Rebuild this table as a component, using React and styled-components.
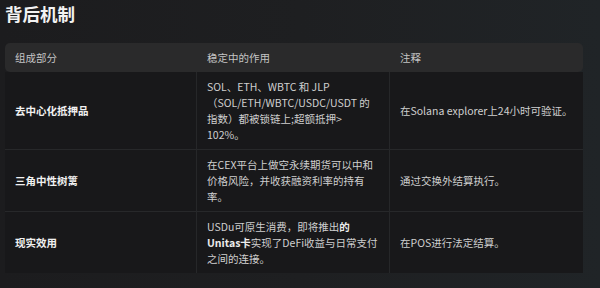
import React from "react";
import styled, { createGlobalStyle } from "styled-components";

const Global = createGlobalStyle`
  html, body { margin: 0; padding: 0; }
  body {
    width: 600px;
    height: 288px;
    overflow: hidden;
    background: linear-gradient(90deg, #1c1c1e 0%, #1e1f21 50%, #202427 100%);
    font-family: "Noto Sans CJK SC", "Noto Sans", sans-serif;
    color: #d0d0d0;
  }
`;

const Page = styled.div`
  padding: 0 5px 0 5px;
  display: flex;
  flex-direction: column;
`;

const Title = styled.h2`
  margin: 0;
  font-size: 17.5px;
  line-height: 28px;
  font-weight: 700;
  color: #f2f2f2;
`;

const Table = styled.div`
  margin-top: 15px;
  width: 578px;
  display: grid;
  grid-template-columns: 192px 193px 193px;
`;

const HeadCell = styled.div`
  background: #2a2a2b;
  height: 29px;
  display: flex;
  align-items: center;
  padding: 0 10px;
  font-size: 10.5px;
  color: #c4c4c4;
  border-radius: ${(p) => (p.$first ? "5px 0 0 5px" : p.$last ? "0 5px 5px 0" : "0")};
`;

const Cell = styled.div`
  background: #18181a;
  padding: 7px 10px 6px;
  font-size: 10.5px;
  line-height: 16px;
  color: #cfcfcf;
  border-bottom: ${(p) => (p.$lastRow ? "none" : "1px solid #27282a")};
  border-right: ${(p) => (p.$lastCol ? "none" : "1px solid #262729")};
  display: flex;
  flex-direction: column;
  justify-content: center;
  font-weight: ${(p) => (p.$bold ? 700 : 400)};
  ${(p) => p.$bold && "color: #f1f1f1;"}
`;

const Line = styled.span`
  display: block;
  white-space: nowrap;
`;

const B = styled.b`
  font-weight: 700;
  color: #ececec;
`;

const Bottom = styled.div`
  margin-top: 16px;
  height: 1px;
  width: 578px;
  background: #262729;
`;

const rows = [
  {
    name: "去中心化抵押品",
    role: [
      "SOL、ETH、WBTC 和 JLP",
      "（SOL/ETH/WBTC/USDC/USDT 的",
      "指数）都被锁链上;超额抵押>",
      "102%。",
    ],
    note: "在Solana explorer上24小时可验证。",
  },
  {
    name: "三角中性树篱",
    role: ["在CEX平台上做空永续期货可以中和", "价格风险，并收获融资利率的持有", "率。"],
    note: "通过交换外结算执行。",
  },
  {
    name: "现实效用",
    role: [
      <>USDu可原生消费，即将推出<B>的</B></>,
      <><B>Unitas卡</B>实现了DeFi收益与日常支付</>,
      "之间的连接。",
    ],
    note: "在POS进行法定结算。",
  },
];

export default function App() {
  return (
    <>
      <Global />
      <Page>
        <Title>背后机制</Title>
        <Table>
          <HeadCell $first>组成部分</HeadCell>
          <HeadCell>稳定中的作用</HeadCell>
          <HeadCell $last>注释</HeadCell>
          {rows.map((r, i) => {
            const last = i === rows.length - 1;
            return (
              <React.Fragment key={i}>
                <Cell $bold $lastRow={last}>{r.name}</Cell>
                <Cell $lastRow={last}>
                  {r.role.map((l, j) => (
                    <Line key={j}>{l}</Line>
                  ))}
                </Cell>
                <Cell $lastCol $lastRow={last}>{r.note}</Cell>
              </React.Fragment>
            );
          })}
        </Table>
        <Bottom />
      </Page>
    </>
  );
}
